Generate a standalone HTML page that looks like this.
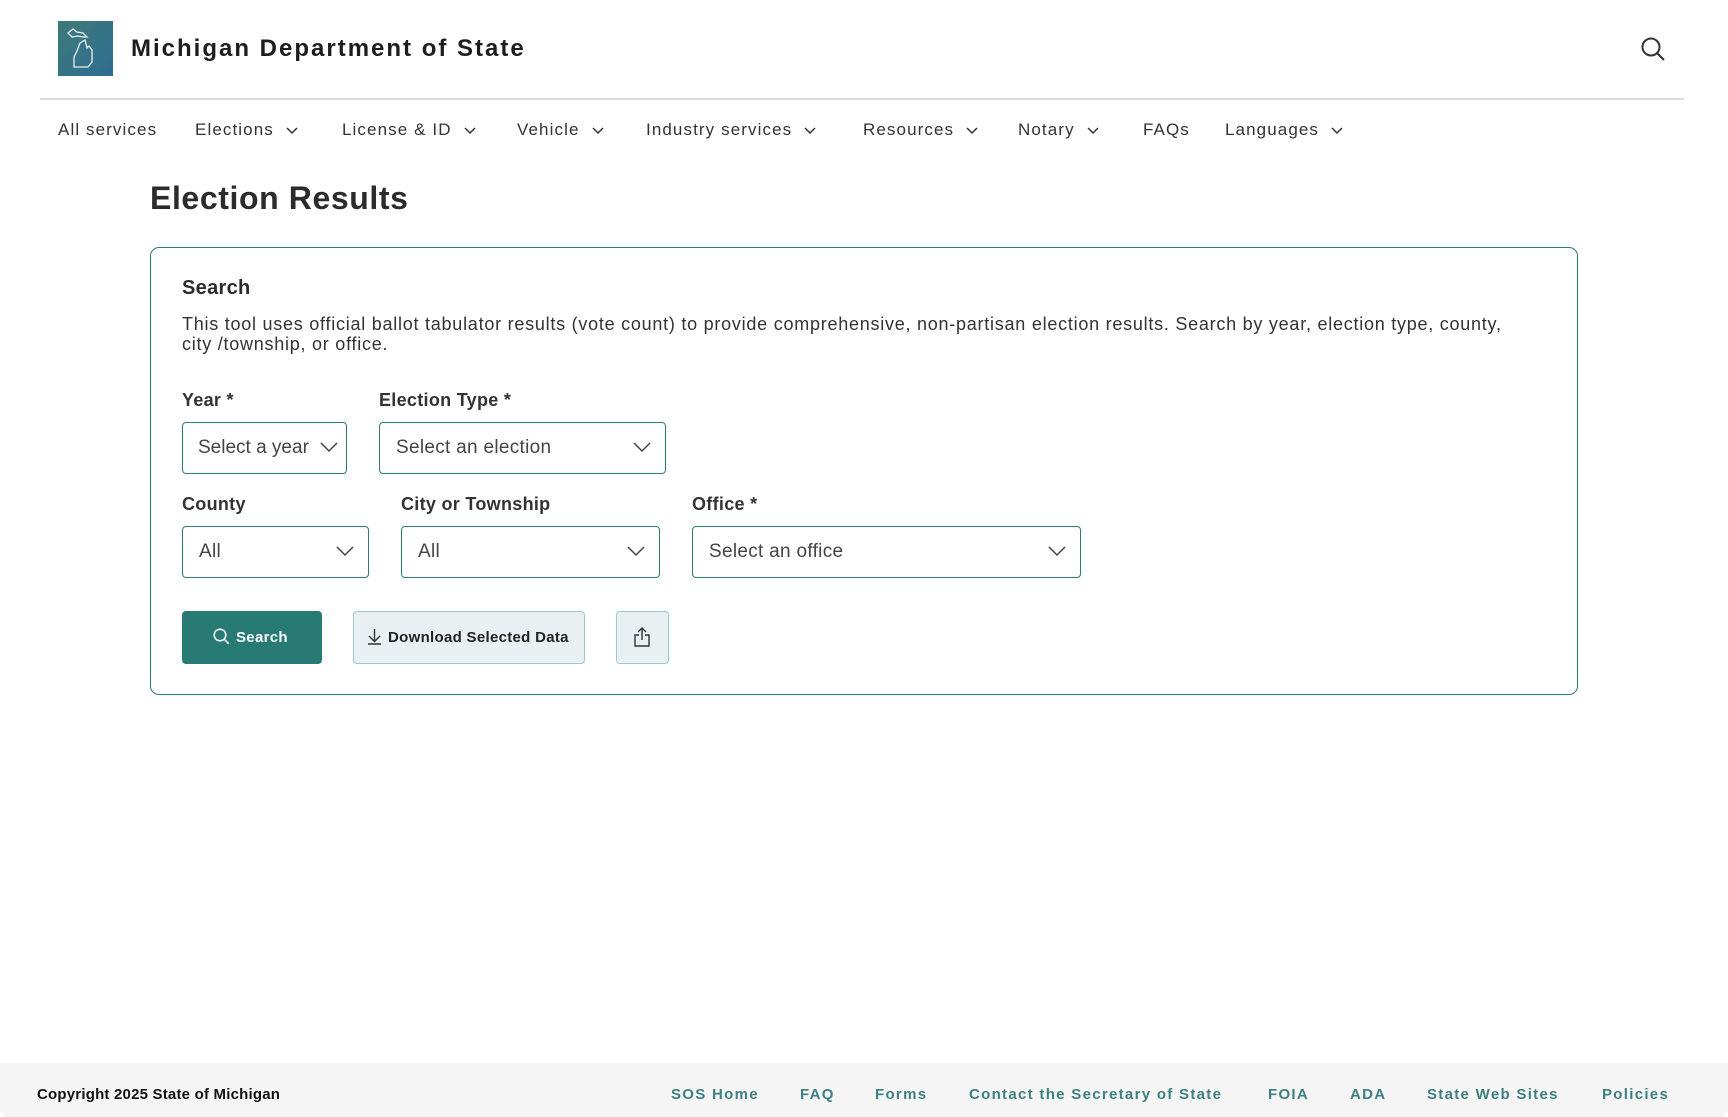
<!DOCTYPE html>
<html><head><meta charset="utf-8"><style>
*{box-sizing:border-box;margin:0;padding:0}
body{width:1728px;height:1117px;position:relative;background:#fff;font-family:"Liberation Sans",sans-serif;color:#1f1f1f;overflow:hidden}
.a{position:absolute;white-space:nowrap}
.nav{top:120px;font-size:17px;letter-spacing:1.1px;color:#333}
.nav svg{margin-left:12px;vertical-align:middle}
.lbl{font-size:18px;font-weight:bold;color:#333;letter-spacing:.3px}
.sel{border:1.5px solid #2a7a74;border-radius:4px;height:52px;font-size:19px;color:#444;padding-left:16px;line-height:50px;letter-spacing:.3px}
.sel svg{position:absolute;right:14px;top:18px}
.ft{top:1086px;font-size:15px;font-weight:bold;letter-spacing:1.3px;color:#3e7f80}
</style></head><body>
<div class="a" style="left:58px;top:21px;width:55px;height:55px;background:linear-gradient(135deg,#3d7a78,#2f6d92)">
<svg width="55" height="55" viewBox="0 0 55 55"><path d="M10 12 l5-4 4 3 6 1 4 4 -4 0 -5-1 -6 1z M22 22 l5-3 2 8 2-2 3 4 0 12 -4 5 -14 0 0-10 3-6z" fill="none" stroke="#e8f0f2" stroke-width="1.3"/></svg></div>
<div class="a" style="left:131px;top:35px;font-size:24px;font-weight:bold;letter-spacing:2px;color:#1d1d1d">Michigan Department of State</div>
<svg class="a" style="left:1640px;top:36px" width="26" height="26" viewBox="0 0 26 26"><circle cx="11" cy="11" r="8.5" fill="none" stroke="#333" stroke-width="2"/><path d="M17 17l7 7" stroke="#333" stroke-width="2"/></svg>
<div class="a" style="left:40px;top:98px;width:1644px;height:2px;background:#ddd"></div>
<div class="a nav" style="left:58px">All services</div>
<div class="a nav" style="left:195px">Elections<svg width="12" height="8"><path d="M1 1l5 5 5-5" fill="none" stroke="#333" stroke-width="1.5"/></svg></div>
<div class="a nav" style="left:342px">License &amp; ID<svg width="12" height="8"><path d="M1 1l5 5 5-5" fill="none" stroke="#333" stroke-width="1.5"/></svg></div>
<div class="a nav" style="left:517px">Vehicle<svg width="12" height="8"><path d="M1 1l5 5 5-5" fill="none" stroke="#333" stroke-width="1.5"/></svg></div>
<div class="a nav" style="left:646px">Industry services<svg width="12" height="8"><path d="M1 1l5 5 5-5" fill="none" stroke="#333" stroke-width="1.5"/></svg></div>
<div class="a nav" style="left:863px">Resources<svg width="12" height="8"><path d="M1 1l5 5 5-5" fill="none" stroke="#333" stroke-width="1.5"/></svg></div>
<div class="a nav" style="left:1018px">Notary<svg width="12" height="8"><path d="M1 1l5 5 5-5" fill="none" stroke="#333" stroke-width="1.5"/></svg></div>
<div class="a nav" style="left:1143px">FAQs</div>
<div class="a nav" style="left:1225px">Languages<svg width="12" height="8"><path d="M1 1l5 5 5-5" fill="none" stroke="#333" stroke-width="1.5"/></svg></div>
<div class="a" style="left:150px;top:180px;font-size:32px;font-weight:bold;letter-spacing:.6px;color:#2b2b2b">Election Results</div>
<div class="a" style="left:150px;top:247px;width:1428px;height:448px;border:1.5px solid #2a7a74;border-radius:9px"></div>
<div class="a" style="left:182px;top:277px;font-size:20px;font-weight:bold;color:#2b2b2b;letter-spacing:.3px">Search</div>
<div class="a" style="left:182px;top:314px;width:1380px;white-space:normal;font-size:18px;line-height:20px;color:#333;letter-spacing:.75px">This tool uses official ballot tabulator results (vote count) to provide comprehensive, non-partisan election results. Search by year, election type, county,<br>city /township, or office.</div>
<div class="a lbl" style="left:182px;top:390px">Year *</div>
<div class="a lbl" style="left:379px;top:390px">Election Type *</div>
<div class="a sel" style="left:182px;top:422px;width:165px;padding-left:15px;letter-spacing:0">Select a year<svg style="right:8px" width="18" height="12"><path d="M1 2l8 8 8-8" fill="none" stroke="#444" stroke-width="1.5"/></svg></div>
<div class="a sel" style="left:379px;top:422px;width:287px">Select an election<svg width="18" height="12"><path d="M1 2l8 8 8-8" fill="none" stroke="#444" stroke-width="1.5"/></svg></div>
<div class="a lbl" style="left:182px;top:494px">County</div>
<div class="a lbl" style="left:401px;top:494px">City or Township</div>
<div class="a lbl" style="left:692px;top:494px">Office *</div>
<div class="a sel" style="left:182px;top:526px;width:187px">All<svg width="18" height="12"><path d="M1 2l8 8 8-8" fill="none" stroke="#444" stroke-width="1.5"/></svg></div>
<div class="a sel" style="left:401px;top:526px;width:259px">All<svg width="18" height="12"><path d="M1 2l8 8 8-8" fill="none" stroke="#444" stroke-width="1.5"/></svg></div>
<div class="a sel" style="left:692px;top:526px;width:389px">Select an office<svg width="18" height="12"><path d="M1 2l8 8 8-8" fill="none" stroke="#444" stroke-width="1.5"/></svg></div>
<div class="a" style="left:182px;top:611px;width:140px;height:53px;background:#287a74;border-radius:4px;color:#fff;font-size:15px;font-weight:bold;line-height:54px;padding-left:31px;letter-spacing:.3px"><svg style="vertical-align:-3px;margin-right:6px" width="17" height="17"><circle cx="7" cy="7" r="5.8" fill="none" stroke="#fff" stroke-width="1.5"/><path d="M11.3 11.3l4.5 4.5" stroke="#fff" stroke-width="1.5"/></svg>Search</div>
<div class="a" style="left:353px;top:611px;width:232px;height:53px;background:#e8f0f3;border:1.5px solid #9fc8c8;border-radius:4px;font-size:15px;font-weight:bold;line-height:52px;padding-left:13px;color:#222;letter-spacing:.3px"><svg style="vertical-align:-3px;margin-right:6px" width="15" height="17"><path d="M7.5 1v12M2 8l5.5 5.5L13 8M1 16h13" fill="none" stroke="#333" stroke-width="1.4"/></svg>Download Selected Data</div>
<div class="a" style="left:616px;top:611px;width:53px;height:53px;background:#e8f0f3;border:1.5px solid #9fc8c8;border-radius:4px"><svg style="position:absolute;left:16px;top:14px" width="18" height="22"><path d="M9 14V2M5 6l4-4 4 4M6 9H2v11h14V9h-4" fill="none" stroke="#333" stroke-width="1.4"/></svg></div>
<div class="a" style="left:0;top:1063px;width:1728px;height:54px;background:#f5f5f5;border-radius:0 0 8px 8px"></div>
<div class="a" style="left:37px;top:1086px;font-size:15px;font-weight:bold;color:#111;letter-spacing:.2px">Copyright 2025 State of Michigan</div>
<div class="a ft" style="left:671px">SOS Home</div>
<div class="a ft" style="left:800px">FAQ</div>
<div class="a ft" style="left:875px">Forms</div>
<div class="a ft" style="left:969px">Contact the Secretary of State</div>
<div class="a ft" style="left:1268px">FOIA</div>
<div class="a ft" style="left:1350px">ADA</div>
<div class="a ft" style="left:1427px">State Web Sites</div>
<div class="a ft" style="left:1602px">Policies</div>
</body></html>
